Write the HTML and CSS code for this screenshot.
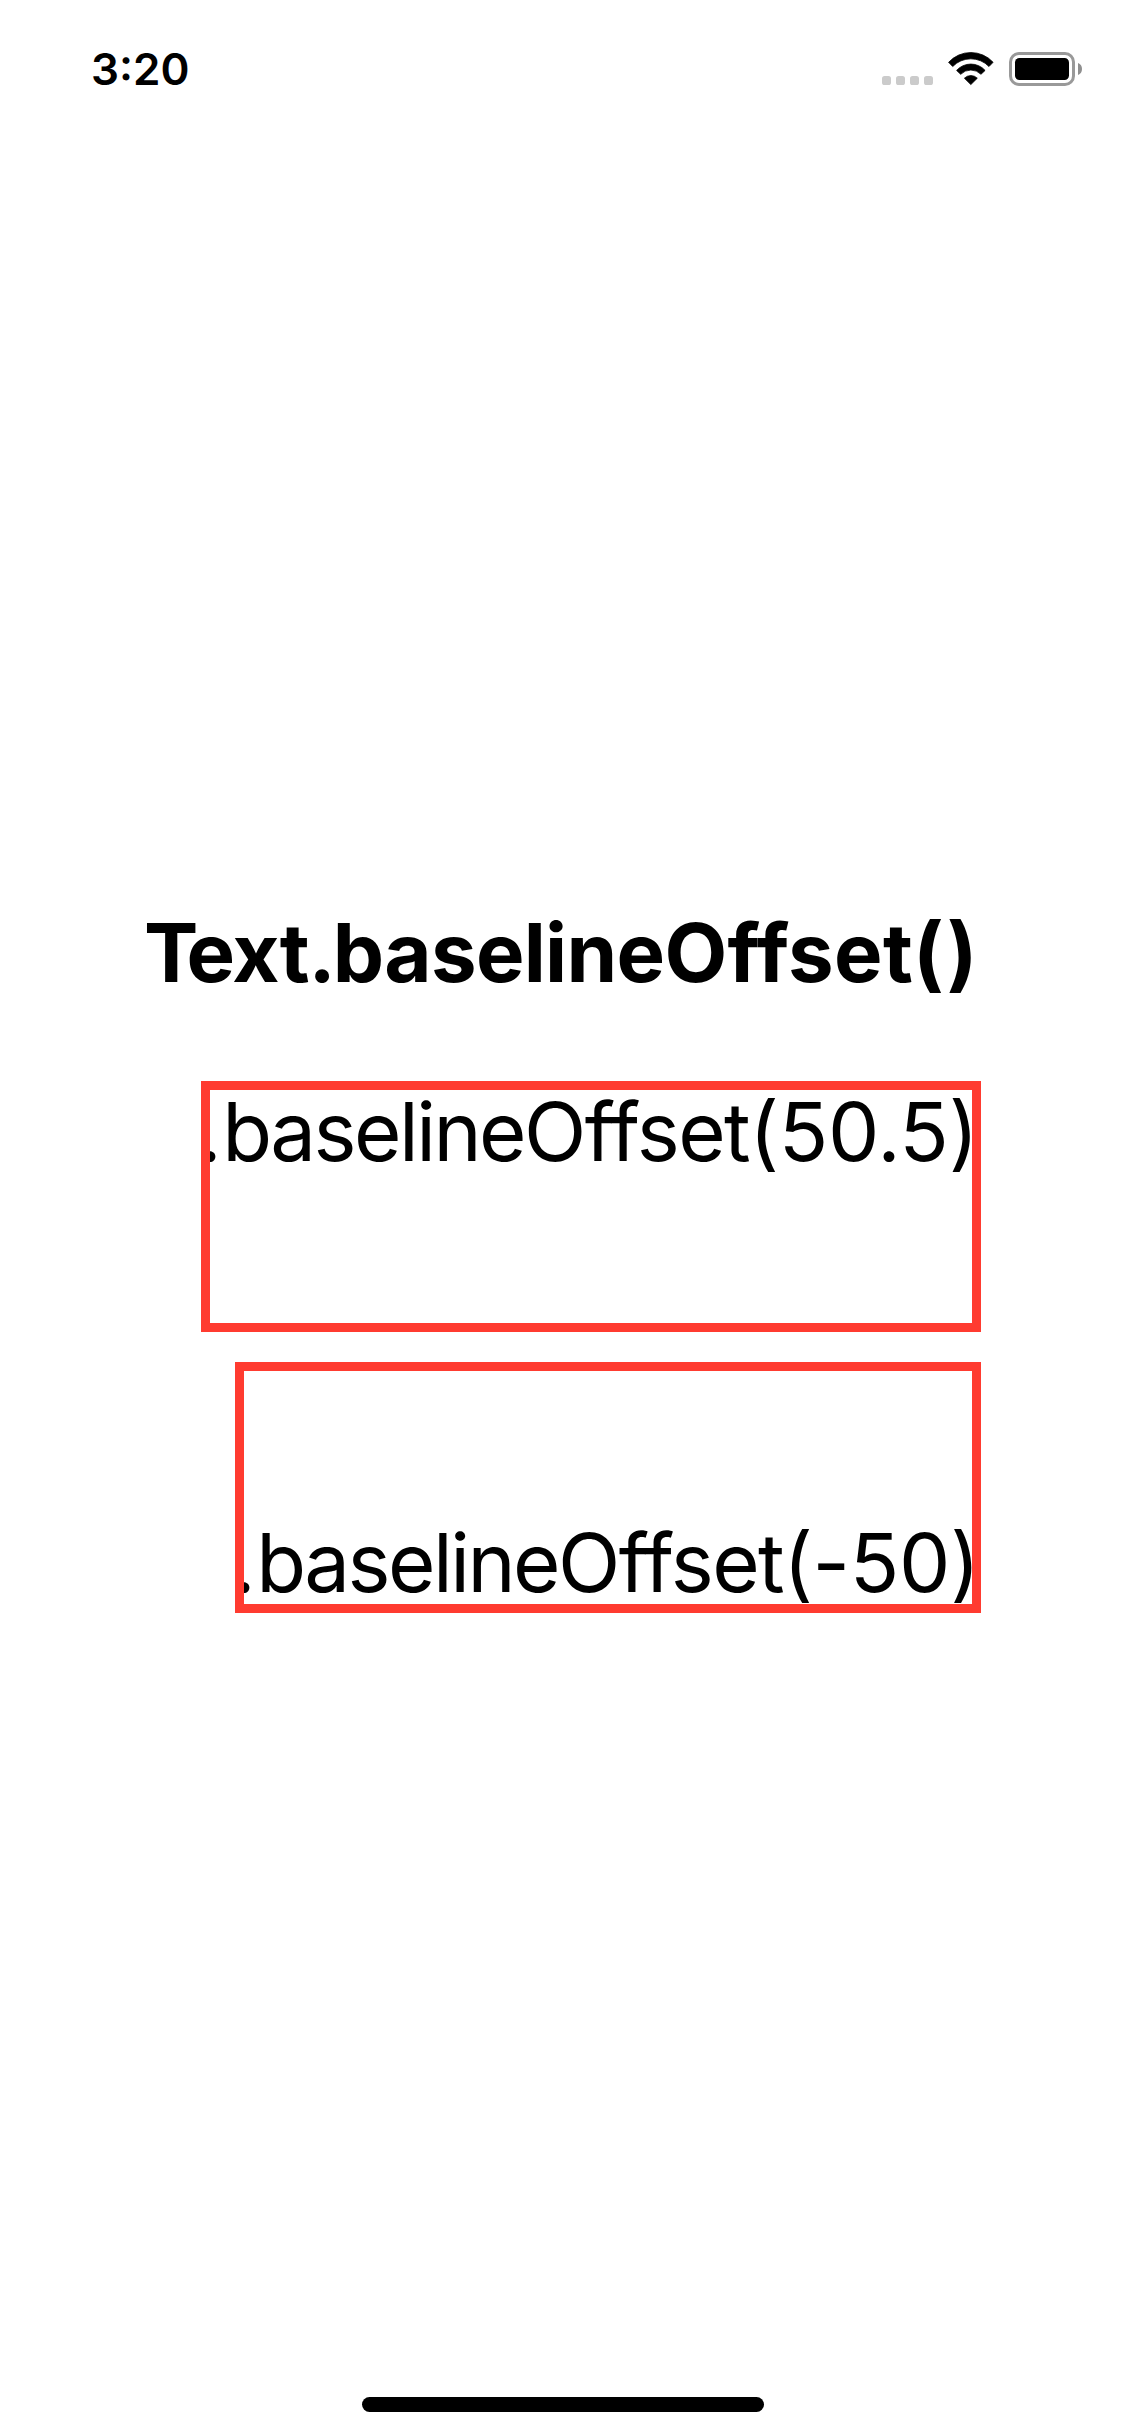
FILE: index.html
```html
<!DOCTYPE html>
<html lang="en">
<head>
<meta charset="utf-8">
<title>Text.baselineOffset()</title>
<link rel="stylesheet" href="styles.css">
</head>
<body>
<div class="screen">
  <header class="status">
    <time class="clock">3:20</time>
    <div class="indicators">
      <svg class="signal" width="51" height="9" viewBox="0 0 51 9" fill="#cbcbcb" aria-hidden="true">
        <rect width="9" height="9" rx="2.6"/>
        <rect x="14" width="9" height="9" rx="2.6"/>
        <rect x="28" width="9" height="9" rx="2.6"/>
        <rect x="42" width="9" height="9" rx="2.6"/>
      </svg>
      <svg class="wifi" width="46" height="34" viewBox="0 0 46 34" aria-hidden="true">
        <path stroke="#000" stroke-width=".8" stroke-linejoin="round" d="M.6 10.3A30.2 30.2 0 0 1 45.1 10.3L41 14.5A25.3 25.3 0 0 0 4.7 14.5ZM8.6 18.4A19.2 19.2 0 0 1 37.1 18.4L33 22.3A14.2 14.2 0 0 0 12.7 22.3ZM16.4 26.2A9.2 9.2 0 0 1 29.3 26.2L22.85 32.6Z"/>
      </svg>
      <svg class="battery" width="74" height="34" viewBox="0 0 74 34" aria-hidden="true">
        <rect x="1.5" y="1.5" width="63" height="31" rx="8.5" fill="none" stroke="#999" stroke-width="3"/>
        <rect x="6" y="6" width="54" height="22" rx="4.5"/>
        <path fill="#8f8f8f" d="M69 11C71.6 12 73 14.3 73 17S71.6 22 69 23Z"/>
      </svg>
    </div>
  </header>

  <main class="content">
    <h1 class="title"><span class="title-t">T</span><span class="title-ext">ext</span><span class="title-dot">.</span><span class="title-base">baseline</span><span class="title-off">Offset</span><span class="title-paren">()</span></h1>
    <p class="box box-raised"><span class="line"><span class="dot">.</span><span class="base">baseline</span><span class="off">Offset</span><span class="arg">(50.5)</span></span></p>
    <p class="box box-lowered"><span class="line"><span class="dot">.</span><span class="base">baseline</span><span class="off">Offset</span><span class="arg-neg">(-50)</span></span></p>
  </main>

  <div class="home"></div>
</div>
</body>
</html>
```

FILE: styles.css
```css
* {
  box-sizing: border-box;
}

body {
  margin: 0;
  background: #fff;
  color: #000;
  font-family: Inter, "Liberation Sans", sans-serif;
}

.screen {
  display: flex;
  flex-direction: column;
  width: 1125px;
  height: 2436px;
  overflow: hidden;
}

/* Status bar */
.status {
  display: flex;
  flex: none;
  justify-content: space-between;
  align-items: flex-start;
  height: 132px;
  padding: 0 43px 0 91px;
}

.clock {
  margin-top: 39px;
  font-size: 44px;
  font-weight: 600;
  line-height: 60px;
}

.indicators {
  display: flex;
  align-items: flex-end;
  margin-top: 52px;
}

.signal {
  margin: 0 15px 1px 0;
}

.wifi {
  margin-right: 15px;
}

.battery {
  margin-right: -1px;
}

/* Labels */
.content {
  display: flex;
  flex: 1;
  flex-direction: column;
  align-items: flex-end;
  padding: 771px 144px 0 0;
}

.title,
.line {
  font-size: 81.5px;
  line-height: 100px;
  white-space: nowrap;
  font-kerning: normal;
}

.title {
  align-self: flex-start;
  margin: 0 0 78px 144px;
  font-weight: 700;
}

.title-t { letter-spacing: -12px; }
.title-ext { letter-spacing: -1px; }
.title-dot { letter-spacing: -3px; }
.title-base { letter-spacing: -0.7px; }
.title-off { letter-spacing: 0.3px; }
.title-paren { letter-spacing: 3px; }

/* The frame covers the edges of the label inside it */
.box {
  display: flex;
  flex: none;
  height: 251px;
  margin: 0 0 30px;
  border: 9px solid #ff3b30;
  overflow: hidden;
}

.box-raised {
  align-items: flex-start;
  width: 780px;
}

.box-lowered {
  align-items: flex-end;
  width: 746px;
}

.line {
  display: block;
  margin-left: -11.7px;
}

.box-raised .line { margin-top: -8px; }
.box-lowered .line { margin-bottom: -9px; }

.dot { letter-spacing: 0.4px; }
.base { letter-spacing: -2.55px; }
.off { letter-spacing: -1.6px; }
.arg { letter-spacing: -0.2px; }
.arg-neg { letter-spacing: -0.3px; }

/* Home indicator */
.home {
  flex: none;
  align-self: center;
  width: 402px;
  height: 15px;
  margin: 0 0 24px 1px;
  border-radius: 8px;
  background: #000;
}
```
